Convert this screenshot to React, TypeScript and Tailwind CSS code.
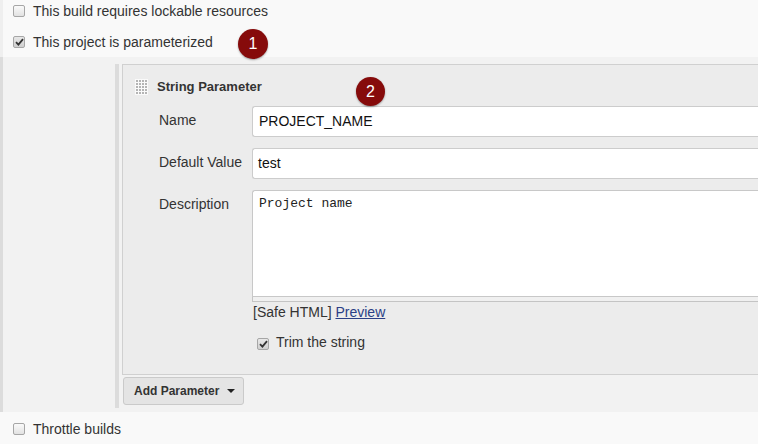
import React from 'react';

function Checkbox({ checked }: { checked?: boolean }) {
  return (
    <span
      className={`flex h-[12px] w-[12px] shrink-0 items-center justify-center rounded-[2px] border border-[#a6a6a6] ${
        checked ? 'bg-gradient-to-b from-[#e8e8e8] to-[#cfcfcf]' : 'bg-gradient-to-b from-[#fafafa] to-[#e2e2e2]'
      }`}
    >
      {checked && (
        <svg width="9" height="8" viewBox="0 0 9 8">
          <path d="M1 4.2 L3.4 6.6 L8 1.2" fill="none" stroke="#333" strokeWidth="1.8" />
        </svg>
      )}
    </span>
  );
}

function CheckRow({ label, checked, className = '' }: { label: string; checked?: boolean; className?: string }) {
  return (
    <div className={`flex h-[22px] items-center gap-[8px] ${className}`}>
      <Checkbox checked={checked} />
      <span>{label}</span>
    </div>
  );
}

function Badge({ n, className }: { n: number; className: string }) {
  return (
    <div
      className={`absolute flex items-center justify-center rounded-full bg-[#860b0b] text-[16px] text-white shadow-[0_1px_2px_rgba(0,0,0,0.35)] ${className}`}
    >
      {n}
    </div>
  );
}

function Grip() {
  const dots = [];
  for (let r = 0; r < 5; r++) {
    for (let c = 0; c < 4; c++) {
      dots.push(<rect key={`${r}-${c}`} x={1 + c * 3} y={1 + r * 3} width="2" height="2" fill="#b4b4b4" />);
    }
  }
  return (
    <svg width="13" height="16" viewBox="0 0 13 16" className="shrink-0 bg-[#fafafa]">
      {dots}
    </svg>
  );
}

function Field({ label, children }: { label: string; children: React.ReactNode }) {
  return (
    <div className="flex">
      <div className="w-[93px] shrink-0 pt-[4px] leading-[20px]">{label}</div>
      <div className="flex-1">{children}</div>
    </div>
  );
}

export default function App() {
  return (
    <div className="relative h-[444px] w-[758px] overflow-hidden bg-[#f9f9f9] font-['Liberation_Sans',Arial,sans-serif] text-[14px] text-[#333]">
      <div className="h-[57px] border-l-[3px] border-[#efefef] pl-[10px]">
        <CheckRow label="This build requires lockable resources" />
        <CheckRow label="This project is parameterized" checked className="mt-[9px]" />
      </div>

      <div className="h-[355px] border-l-[3px] border-[#dcdcdc] bg-[#f2f2f2] pb-[4px] pl-[112px] pt-[7px]">
        <div className="flex h-full flex-col border-l-[4px] border-[#dcdcdc] pl-[3px]">
          <div className="h-[311px] border border-r-0 border-[#d0d0d0] bg-[#ececec]">
            <div className="flex h-[41px] items-center gap-[9px] pl-[12px] pt-[2px]">
              <Grip />
              <span className="text-[13px] font-bold">String Parameter</span>
            </div>
            <div className="flex flex-col gap-[11px] pl-[36px]">
              <Field label="Name">
                <div className="flex h-[31px] items-center rounded-l-[3px] border border-r-0 border-[#cccccc] bg-white pl-[6px] text-[#111]">
                  PROJECT_NAME
                </div>
              </Field>
              <Field label="Default Value">
                <div className="flex h-[31px] items-center rounded-l-[3px] border border-r-0 border-[#cccccc] bg-white pl-[5px] text-[#111]">
                  test
                </div>
              </Field>
              <Field label="Description">
                <div className="h-[107px] rounded-tl-[3px] border border-r-0 border-[#c8c8c8] bg-white pl-[6px] pt-[5px] font-['Liberation_Mono',monospace] text-[13px] leading-[16px] text-[#222]">
                  Project name
                </div>
                <div className="h-[5px] border-b border-l border-[#c4c4c4] bg-[#f0f0f0]" />
                <div className="pl-[1px] leading-[20px]">
                  [Safe HTML] <span className="text-[#2b3f86] underline">Preview</span>
                </div>
                <div className="mt-[10px] flex h-[20px] items-center gap-[7px] pl-[5px]">
                  <span className="translate-y-[2px]">
                    <Checkbox checked />
                  </span>
                  <span>Trim the string</span>
                </div>
              </Field>
            </div>
          </div>
          <div className="ml-[1px] mt-[2px] flex h-[28px] w-[121px] items-center rounded-[3px] border border-[#cacaca] bg-[#e4e4e4] pl-[10px] text-[12px] font-bold text-[#333]">
            <span>Add Parameter</span>
            <svg width="8" height="4" viewBox="0 0 8 4" className="ml-auto mr-[8px]">
              <path d="M0 0 H8 L4 4 Z" fill="#222" />
            </svg>
          </div>
        </div>
      </div>

      <div className="pl-[13px] pt-[6px]">
        <CheckRow label="Throttle builds" />
      </div>

      <Badge n={1} className="left-[238px] top-[29px] h-[30px] w-[30px]" />
      <Badge n={2} className="left-[356px] top-[77px] h-[29px] w-[29px]" />
    </div>
  );
}
